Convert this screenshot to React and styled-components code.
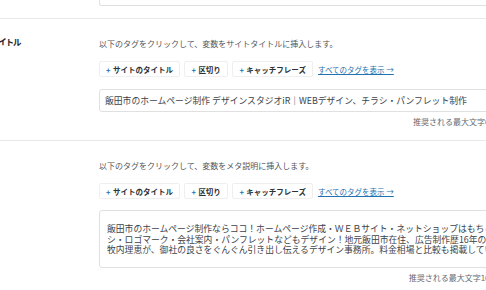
import React from 'react'
import styled, { createGlobalStyle } from "styled-components"

const GlobalStyle = createGlobalStyle`
    html, body {
        margin: 0;
        padding: 0;
        background: #fff;
        overflow: hidden;
    }
    body {
        font-family: "Noto Sans CJK JP", "Noto Sans", sans-serif;
        color: #3c434a;
    }
`;

const tags = ["サイトのタイトル", "区切り", "キャッチフレーズ"]

const fields = [
    {
        label: "タイトル",
        target: "サイトタイトル",
        value: "飯田市のホームページ制作 デザインスタジオiR｜WEBデザイン、チラシ・パンフレット制作",
        max: 60,
        multiline: false
    },
    {
        label: "",
        target: "メタ説明",
        value: "飯田市のホームページ制作ならココ！ホームページ作成・ＷＥＢサイト・ネットショップはもちろん、チラ\nシ・ロゴマーク・会社案内・パンフレットなどもデザイン！地元飯田市在住、広告制作歴16年のデザイナー\n牧内理恵が、御社の良さをぐんぐん引き出し伝えるデザイン事務所。料金相場と比較も掲載しています。",
        max: 160,
        multiline: true
    }
]

const App = () => {
    return (
        <Page>
            <GlobalStyle />
            <Section>
                <Label />
                <Content>
                    <PrevField />
                </Content>
            </Section>
            {fields.map((field) => (
                <Section key={field.target} spaced>
                    <Label>{field.label}</Label>
                    <Content>
                        <Help>以下のタグをクリックして、変数を{field.target}に挿入します。</Help>
                        <TagRow>
                            {tags.map((tag) => (
                                <TagButton key={tag}>
                                    <Plus>+</Plus>{tag}
                                </TagButton>
                            ))}
                            <ShowAll href="#">すべてのタグを表示 →</ShowAll>
                        </TagRow>
                        {field.multiline ? (
                            <TextArea readOnly wrap="off" value={field.value} />
                        ) : (
                            <TextInput readOnly type="text" value={field.value} />
                        )}
                        <Counter>推奨される最大文字{field.max}</Counter>
                    </Content>
                </Section>
            ))}
        </Page>
    )
}

export default App

const Page = styled.div`
    margin-left: -9px;
    width: 520px;
`;

const Section = styled.div`
    display: grid;
    grid-template-columns: 108px 395px;
    padding: ${props => props.spaced ? "19px 0 12px" : "0 0 12px"};
    border-bottom: 1px solid #e8e8e8;
`;

const Label = styled.div`
    font-size: 8.5px;
    font-weight: bold;
    letter-spacing: -1.2px;
    line-height: 12px;
    margin-top: -3px;
    color: #1d2327;
`;

const Content = styled.div`
    display: flex;
    flex-direction: column;
`;

const PrevField = styled.div`
    height: 5px;
    border: 1px solid #e0e0e0;
    border-top: none;
    border-radius: 0 0 3px 3px;
`;

const Help = styled.p`
    margin: 0;
    font-size: 8px;
    line-height: 12px;
    color: #50575e;
    white-space: nowrap;
`;

const TagRow = styled.div`
    display: flex;
    align-items: center;
    gap: 4.5px;
    margin-top: 11px;
`;

const TagButton = styled.button`
    display: flex;
    align-items: center;
    gap: 2.5px;
    height: 16px;
    padding: 0 6px;
    border: 1px solid #efefef;
    border-radius: 2px;
    background: #fff;
    font-family: inherit;
    font-size: 7.5px;
    font-weight: bold;
    color: #2c3338;
    white-space: nowrap;
`;

const Plus = styled.span`
    color: #2271b1;
    font-weight: bold;
`;

const ShowAll = styled.a`
    margin-left: 0.5px;
    font-size: 7.5px;
    color: #2271b1;
    text-decoration: underline;
    white-space: nowrap;
`;

const TextInput = styled.input`
    box-sizing: border-box;
    margin-top: 12px;
    height: 23px;
    width: 100%;
    padding: 0 5px;
    border: 1px solid #e0e0e0;
    border-radius: 3px;
    font-family: inherit;
    font-size: 8.8px;
    color: #3c434a;
    outline: none;
`;

const TextArea = styled.textarea`
    box-sizing: border-box;
    margin-top: 11px;
    height: 58px;
    width: 100%;
    padding: 13px 7px 6px;
    border: 1px solid #e0e0e0;
    border-radius: 3px;
    font-family: inherit;
    font-size: 8.8px;
    line-height: 10.6px;
    color: #3c434a;
    resize: none;
    overflow: hidden;
    white-space: pre;
    outline: none;
`;

const Counter = styled.div`
    margin-top: 4px;
    font-size: 8px;
    line-height: 12px;
    text-align: right;
    color: #646970;
    white-space: nowrap;
`;
